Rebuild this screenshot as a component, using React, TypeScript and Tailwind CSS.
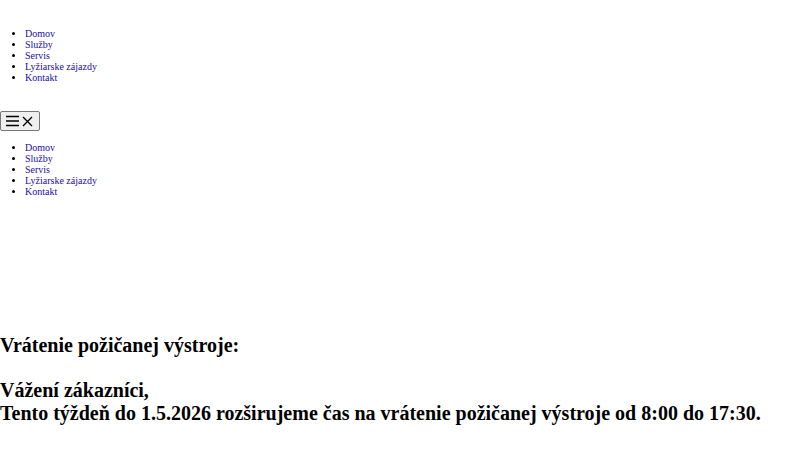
const links = ['Domov', 'Služby', 'Servis', 'Lyžiarske zájazdy', 'Kontakt']

function NavList({ className }: { className: string }) {
  return (
    <ul className={`list-disc pl-[25px] text-[10px] leading-[11px] ${className}`}>
      {links.map((l) => (
        <li key={l}>
          <a href="#" className="text-[#1a0ca8]">
            {l}
          </a>
        </li>
      ))}
    </ul>
  )
}

export default function App() {
  return (
    <div className="w-[800px] h-[450px] bg-white text-black overflow-hidden" style={{ fontFamily: '"Liberation Serif", serif' }}>
      <NavList className="pt-[28px]" />
      <button className="mt-[28px] flex items-center gap-[3px] h-[20px] w-[40px] px-[5px] bg-[#efefef] border border-[#767676] rounded-[2px]">
        <svg width="13" height="12" viewBox="0 0 13 12">
          <path d="M0 1.5H13M0 6H13M0 10.5H13" stroke="#000" strokeWidth="1.6" />
        </svg>
        <svg width="11" height="11" viewBox="0 0 11 11">
          <path d="M1 1L10 10M10 1L1 10" stroke="#000" strokeWidth="1.4" />
        </svg>
      </button>
      <NavList className="mt-[11px]" />
      <div className="mt-[137px] text-[20px] leading-[23px] font-bold">
        <h1>Vrátenie požičanej výstroje:</h1>
        <p className="mt-[22px]">Vážení zákazníci,</p>
        <p>Tento týždeň do 1.5.2026 rozširujeme čas na vrátenie požičanej výstroje od 8:00 do 17:30.</p>
      </div>
    </div>
  )
}
